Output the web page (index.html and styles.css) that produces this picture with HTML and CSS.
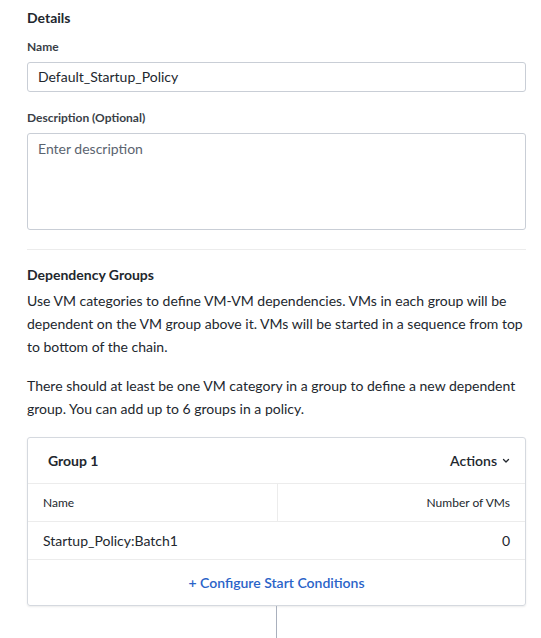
FILE: index.html
```html
<!DOCTYPE html>
<html>
<head>
<meta charset="utf-8">
<link rel="stylesheet" href="styles.css">
</head>
<body>
<div class="page">
  <h2 class="section-title">Details</h2>
  <label class="field-label">Name</label>
  <div class="input">Default_Startup_Policy</div>
  <label class="field-label desc-label">Description (Optional)</label>
  <div class="textarea">Enter description</div>
  <hr class="divider">
  <h2 class="section-title dep-title">Dependency Groups</h2>
  <p class="para">Use VM categories to define VM-VM dependencies. VMs in each group will be dependent on the VM group above it. VMs will be started in a sequence from top to bottom of the chain.</p>
  <p class="para para2">There should at least be one VM category in a group to define a new dependent group. You can add up to 6 groups in a policy.</p>
  <div class="card">
    <div class="card-head">
      <span class="group-name">Group 1</span>
      <span class="actions">Actions <svg class="chev" width="8" height="6" viewBox="0 0 8 6"><path d="M1.5 1.5 L4 4 L6.5 1.5" fill="none" stroke="#22272e" stroke-width="1.3" stroke-linecap="round" stroke-linejoin="round"/></svg></span>
    </div>
    <div class="trow thead">
      <div class="cell">Name</div>
      <div class="cell right">Number of VMs</div>
    </div>
    <div class="trow tbody">
      <div class="cell">Startup_Policy:Batch1</div>
      <div class="cell right">0</div>
    </div>
    <div class="card-foot"><span class="link">+ Configure Start Conditions</span></div>
  </div>
  <div class="connector"></div>
</div>
</body>
</html>
```
FILE: styles.css
```css
html, body {
  margin: 0;
  padding: 0;
  background: #fff;
}
body {
  font-family: Lato, "Open Sans", sans-serif;
  color: #22272e;
  font-size: 14px;
}
.page {
  padding: 9px 15px 0 27px;
  display: flex;
  flex-direction: column;
}
.section-title {
  margin: 0;
  font-size: 14px;
  font-weight: 700;
  line-height: 18px;
}
.field-label {
  display: block;
  font-size: 12px;
  font-weight: 700;
  color: #3a3f47;
  line-height: 16px;
  margin-top: 12px;
}
.input {
  margin-top: 7px;
  height: 28px;
  border: 1px solid #c9ced6;
  border-radius: 3px;
  padding: 0 10px;
  line-height: 28px;
  font-size: 14px;
  color: #22272e;
}
.desc-label {
  margin-top: 18px;
}
.textarea {
  margin-top: 7px;
  height: 85px;
  border: 1px solid #c9ced6;
  border-radius: 3px;
  padding: 6px 10px 4px;
  line-height: 18px;
  color: #5b6470;
}
.divider {
  border: 0;
  border-top: 1px solid #ececec;
  margin: 19px 0 0;
}
.dep-title {
  margin-top: 16px;
}
.para {
  margin: 5px 0 0;
  line-height: 23px;
  font-size: 14px;
}
.para2 {
  margin-top: 16px;
}
.card {
  margin-top: 17px;
  border: 1px solid #d5d9df;
  border-radius: 3px;
  box-shadow: 0 1px 2px rgba(0,0,0,0.08);
  display: flex;
  flex-direction: column;
}
.card-head {
  height: 45px;
  display: flex;
  align-items: center;
  justify-content: space-between;
  padding: 0 15px 0 20px;
  border-bottom: 1px solid #ececec;
}
.group-name {
  font-weight: 700;
}
.actions {
  display: flex;
  align-items: center;
  gap: 5px;
  font-weight: 600;
}
.trow {
  display: grid;
  grid-template-columns: 1fr 1fr;
  border-bottom: 1px solid #ececec;
}
.thead {
  height: 37px;
  font-size: 12px;
}
.thead .cell + .cell {
  border-left: 1px solid #ececec;
}
.tbody {
  height: 37px;
}
.cell {
  display: flex;
  align-items: center;
  padding: 0 15px;
}
.cell.right {
  justify-content: flex-end;
}
.card-foot {
  height: 45px;
  display: flex;
  align-items: center;
  justify-content: center;
}
.link {
  color: #2a63c8;
  font-weight: 600;
}
.connector {
  align-self: center;
  width: 1px;
  height: 40px;
  background: #a9b0bd;
}
```
